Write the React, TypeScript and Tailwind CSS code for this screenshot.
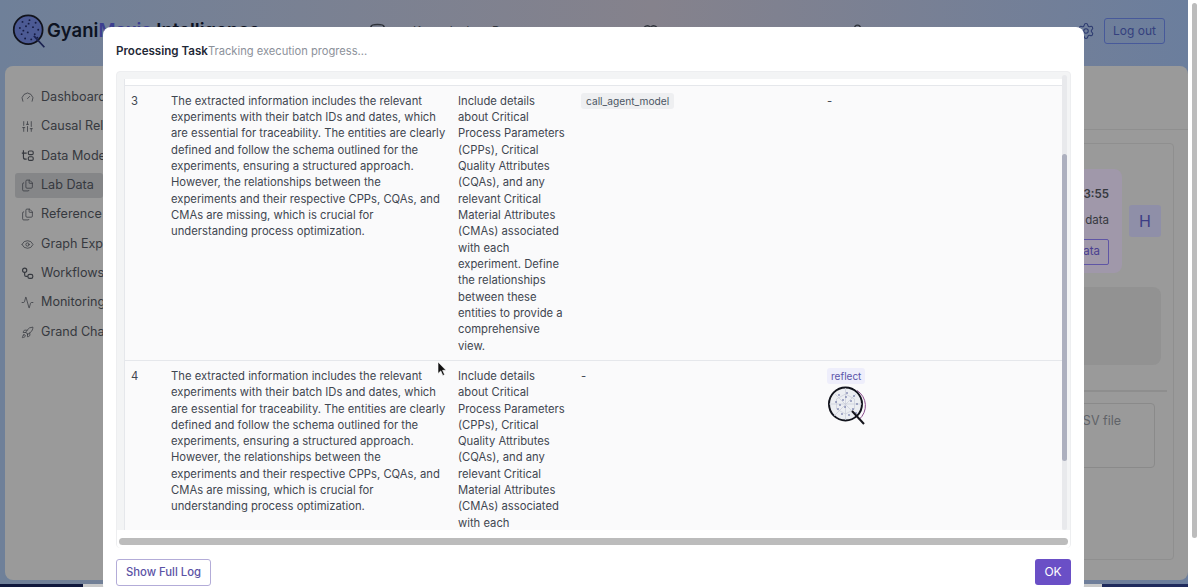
import { Activity, Files, Eye, Gauge, Rocket, Settings, SlidersVertical, Database, Heart, User } from "lucide-react";

const Logo = ({ size, light }: { size: number; light?: boolean }) => {
  const dots = [[12,9],[20,7],[27,10],[9,16],[16,14],[24,15],[30,18],[11,23],[18,21],[26,23],[15,28],[22,29],[29,27],[19,11],[13,19]];
  return (
    <svg width={size} height={size} viewBox="0 0 40 40" fill="none">
      {light && <path d="M30 4.5a18 18 0 0 1 2 29" stroke="#8a4a8c" strokeWidth="1" />}
      <circle cx="18.5" cy="18" r="16.5" fill={light ? "#eceef2" : "#4c5a94"} stroke="#11131c" strokeWidth="2" />
      {light && <path d="M18.5 2v32M2 18h33M7 7l23 23M30 7 7 30M18.5 8l9 5v10l-9 5-9-5V13z" stroke="#c9ccd8" strokeWidth=".7" />}
      {dots.map(([x, y], i) => (
        <circle key={i} cx={x} cy={y} r={light ? 0.8 : 1.1} fill={light ? "#4c5590" : "#161c42"} />
      ))}
      <path d="M25 25 37 38" stroke={light ? "#15151c" : "#1b2250"} strokeWidth="2" />
    </svg>
  );
};

const ModelsIcon = ({ size, strokeWidth, className }: { size: number; strokeWidth: number; className?: string }) => (
  <svg width={size} height={size} viewBox="0 0 16 16" fill="none" stroke="currentColor" strokeWidth={strokeWidth} className={className}>
    <path d="M3 1.5v8.5a2.5 2.5 0 0 0 2.5 2.5H7M1 5h6" />
    <rect x="9" y="2.5" width="6" height="4.5" rx="1.5" />
    <rect x="9" y="9.5" width="6" height="4.5" rx="1.5" />
  </svg>
);

const FlowIcon = ({ size, strokeWidth, className }: { size: number; strokeWidth: number; className?: string }) => (
  <svg width={size} height={size} viewBox="0 0 16 16" fill="none" stroke="currentColor" strokeWidth={strokeWidth} className={className}>
    <circle cx="4.5" cy="4" r="2.6" />
    <path d="M4.5 6.6v3.2c0 1 .8 1.8 1.8 1.8h2" />
    <rect x="8.5" y="9" width="6" height="5" rx="2" />
  </svg>
);

const nav = [
  { icon: Gauge, label: "Dashboard" },
  { icon: SlidersVertical, label: "Causal Relations" },
  { icon: ModelsIcon, label: "Data Models" },
  { icon: Files, label: "Lab Data", active: true },
  { icon: Files, label: "Reference Data" },
  { icon: Eye, label: "Graph Explorer" },
  { icon: FlowIcon, label: "Workflows" },
  { icon: Activity, label: "Monitoring" },
  { icon: Rocket, label: "Grand Challenges" },
];

const reasoning =
  "The extracted information includes the relevant experiments with their batch IDs and dates, which are essential for traceability. The entities are clearly defined and follow the schema outlined for the experiments, ensuring a structured approach. However, the relationships between the experiments and their respective CPPs, CQAs, and CMAs are missing, which is crucial for understanding process optimization.";
const next =
  "Include details about Critical Process Parameters (CPPs), Critical Quality Attributes (CQAs), and any relevant Critical Material Attributes (CMAs) associated with each experiment. Define the relationships between these entities to provide a comprehensive view.";

export default function App() {
  return (
    <div className="relative h-[587px] w-[1200px] overflow-hidden bg-white font-['Inter',sans-serif] text-[#36393f]">
      {/* page behind the dialog, already dimmed */}
      <div className="flex h-[584px] w-[1188px] flex-col bg-[linear-gradient(90deg,#6f8099_0%,#85828c_55%,#6b7e9d_100%)] pb-[4px] pt-[3px]">
        <header className="flex h-[63px] shrink-0 items-center pb-[7px] pl-3 pr-[23px]">
          <div className="flex w-[357px] shrink-0 items-center">
            <Logo size={35} />
            <span className="whitespace-nowrap text-[18.5px] font-semibold text-[#0d1322]">
              Gyani<span className="text-[#3c3f90]">Maxis</span> Intelligence
            </span>
          </div>
          <Database size={17} className="shrink-0 text-[#30343c]" />
          <span className="ml-[27px] w-[114px] shrink-0 text-xs tracking-widest text-[#30343c]">Knowledge Base</span>
          <Heart size={17} className="ml-[115px] shrink-0 text-[#30343c]" />
          <span className="ml-[1px] w-[55px] shrink-0 whitespace-nowrap text-[10px] text-[#30343c]">Sample Data</span>
          <User size={17} className="ml-[134px] shrink-0 text-[#30343c]" />
          <span className="ml-[5px] whitespace-nowrap text-[10px] text-[#30343c]">Model Config</span>
          <div className="ml-auto flex items-center gap-[9px]">
            <Settings size={18} strokeWidth={1.4} className="text-[#2c3a70]" />
            <button className="h-[26px] w-[61px] rounded-[3px] border border-[#47599a] text-[12px] text-[#34407e]">Log out</button>
          </div>
        </header>
        <main className="ml-[5px] flex min-h-0 flex-1 rounded-lg bg-[#9a9a9a]">
          <aside className="flex w-[98px] shrink-0 flex-col gap-[5px] pl-[10px] pt-[19px]">
            {nav.map(({ icon: Icon, label, active }) => (
              <div key={label} className={`flex h-[24.4px] items-center gap-[7px] whitespace-nowrap rounded-[3px] pl-[6px] text-[12.6px] ${active ? "bg-[#858688]" : ""}`}>
                <Icon size={13} strokeWidth={1.4} className="shrink-0" />
                {label}
              </div>
            ))}
          </aside>
          <div className="mt-[63px] flex min-w-0 flex-1 flex-col border-t border-[#8f8f8f] px-[14px] pt-[13px]">
            <div className="ml-auto flex h-[417px] w-[1000px] flex-col rounded border border-[#8f8f8f] p-3">
              <div className="flex justify-end gap-[7px] pt-[13px]">
                <div className="h-[104px] w-[130px] rounded-lg bg-[#a098aa] pr-[13px] pt-[17px] text-right text-[11.5px]">
                  <div className="font-semibold">12:23:55</div>
                  <div className="mt-[9px]">Lab data</div>
                  <button className="mt-[9px] h-[26px] rounded-[2px] border border-[#5f55a5] px-2 text-[#4a3f90]">data</button>
                </div>
                <div className="mt-[36px] flex h-[32px] w-[32px] items-center justify-center rounded-[3px] bg-[#8f8fa8] text-[16px] text-[#3d3d85]">H</div>
              </div>
              <div className="mt-[14px] h-[78px] rounded-lg bg-[#929292]" />
              <div className="-mx-[6px] mt-[25px] h-[2px] bg-[#8e8e8e]" />
              <div className="mr-[6px] mt-[11px] flex h-[65px] items-start justify-end rounded border border-[#8a8a8a] pr-[33px] pt-[8px] text-[12.5px] text-[#606368]">Upload CSV file</div>
            </div>
          </div>
        </main>
      </div>
      {/* browser bottom strip */}
      <div className="absolute bottom-0 left-0 h-[3px] w-[1188px] bg-[linear-gradient(90deg,#10183c,#10183c_7%,#c9c9c9_7%,#c9c9c9_92.8%,#1f2a5c_92.8%)]" />

      {/* dialog */}
      <div className="absolute left-[103px] top-[27px] flex h-[566px] w-[981px] flex-col rounded-lg bg-white px-[13px] pb-[12px] pt-[19px]">
        <div className="flex h-[14px] items-center leading-none">
          <span className="text-[11.6px] font-semibold text-[#1f2937]">Processing Task</span>
          <span className="text-[11.15px] text-[#8c919a]">Tracking execution progress...</span>
        </div>
        <div className="mt-[13px] h-[477px] w-[955px] shrink-0 rounded border border-[#edeef0] bg-[#f3f4f5]">
          <div className="relative h-[458px] overflow-hidden pl-[7px] pr-[8px] pt-[7px]">
            <div className="h-[451px] overflow-hidden border-l border-[#e5e7eb] bg-[#fafafb]">
              <div className="h-[7px] border-b border-[#e5e7eb] bg-white" />
              <table className="w-full table-fixed border-collapse text-[11.25px] leading-[16.33px] text-[#3f4650]">
                <colgroup>
                  <col className="w-[46px]" />
                  <col className="w-[287px]" />
                  <col className="w-[123px]" />
                  <col className="w-[246px]" />
                  <col />
                </colgroup>
                <tbody>
                  <tr className="border-b border-[#e5e7eb] align-top">
                    <td className="pb-[6px] pl-[6px] pt-[7px]">3</td>
                    <td className="pb-[6px] pr-[9px] pt-[7px]">{reasoning}</td>
                    <td className="pb-[6px] pr-[14px] pt-[7px]">{next}</td>
                    <td className="pt-[7px]">
                      <span className="rounded-[3px] bg-[#eeeff1] px-[5px] py-[2px] text-[10.2px] text-[#4b5563]">call_agent_model</span>
                    </td>
                    <td className="pt-[7px]">-</td>
                  </tr>
                  <tr className="align-top">
                    <td className="pb-[6px] pl-[6px] pt-[7px]">4</td>
                    <td className="pb-[6px] pr-[9px] pt-[7px]">{reasoning}</td>
                    <td className="pb-[6px] pr-[14px] pt-[7px]">{next}</td>
                    <td className="pt-[7px]">-</td>
                    <td className="pt-[7px]">
                      <span className="rounded-[3px] bg-[#eeeefb] px-[4px] py-[2px] text-[10px] text-[#5b54a8]">reflect</span>
                      <div className="mt-[2px]"><Logo size={40} light /></div>
                    </td>
                  </tr>
                </tbody>
              </table>
            </div>
            {/* vertical scrollbar */}
            <div className="absolute bottom-0 right-[3px] top-[3px] w-[5px] rounded-full bg-[#e8e9ec]">
              <div className="mt-[79px] h-[307px] rounded-full bg-[#adb0bf]" />
            </div>
          </div>
          <div className="h-[18px] rounded-b bg-white px-[2px] pt-[8px]">
            <div className="h-[7px] rounded-full bg-[#bcbcbc]" />
          </div>
        </div>
        <div className="mt-[11px] flex shrink-0 items-start justify-between">
          <button className="h-[27px] w-[95px] rounded-[3px] border border-[#b3acd8] text-[11.3px] font-medium text-[#5b52a5]">Show Full Log</button>
          <button className="h-[26px] w-[36px] rounded-[3px] bg-[#6a4fc6] text-[12px] text-white">OK</button>
        </div>
      </div>
      {/* mouse pointer */}
      <svg className="absolute left-[437px] top-[361px]" width="10" height="16" viewBox="0 0 10 16">
        <path d="M1 1v11.5l2.8-2.6 2 4.6 1.8-.8-2-4.4H9z" fill="#111" stroke="#fff" strokeWidth=".6" />
      </svg>
      {/* page scrollbar */}
      <div className="absolute right-0 top-0 h-full w-[12px] bg-white pl-[4px] pt-[3px]">
        <div className="h-[535px] w-[5px] rounded-full bg-[#bcbcbc]" />
      </div>
    </div>
  );
}
